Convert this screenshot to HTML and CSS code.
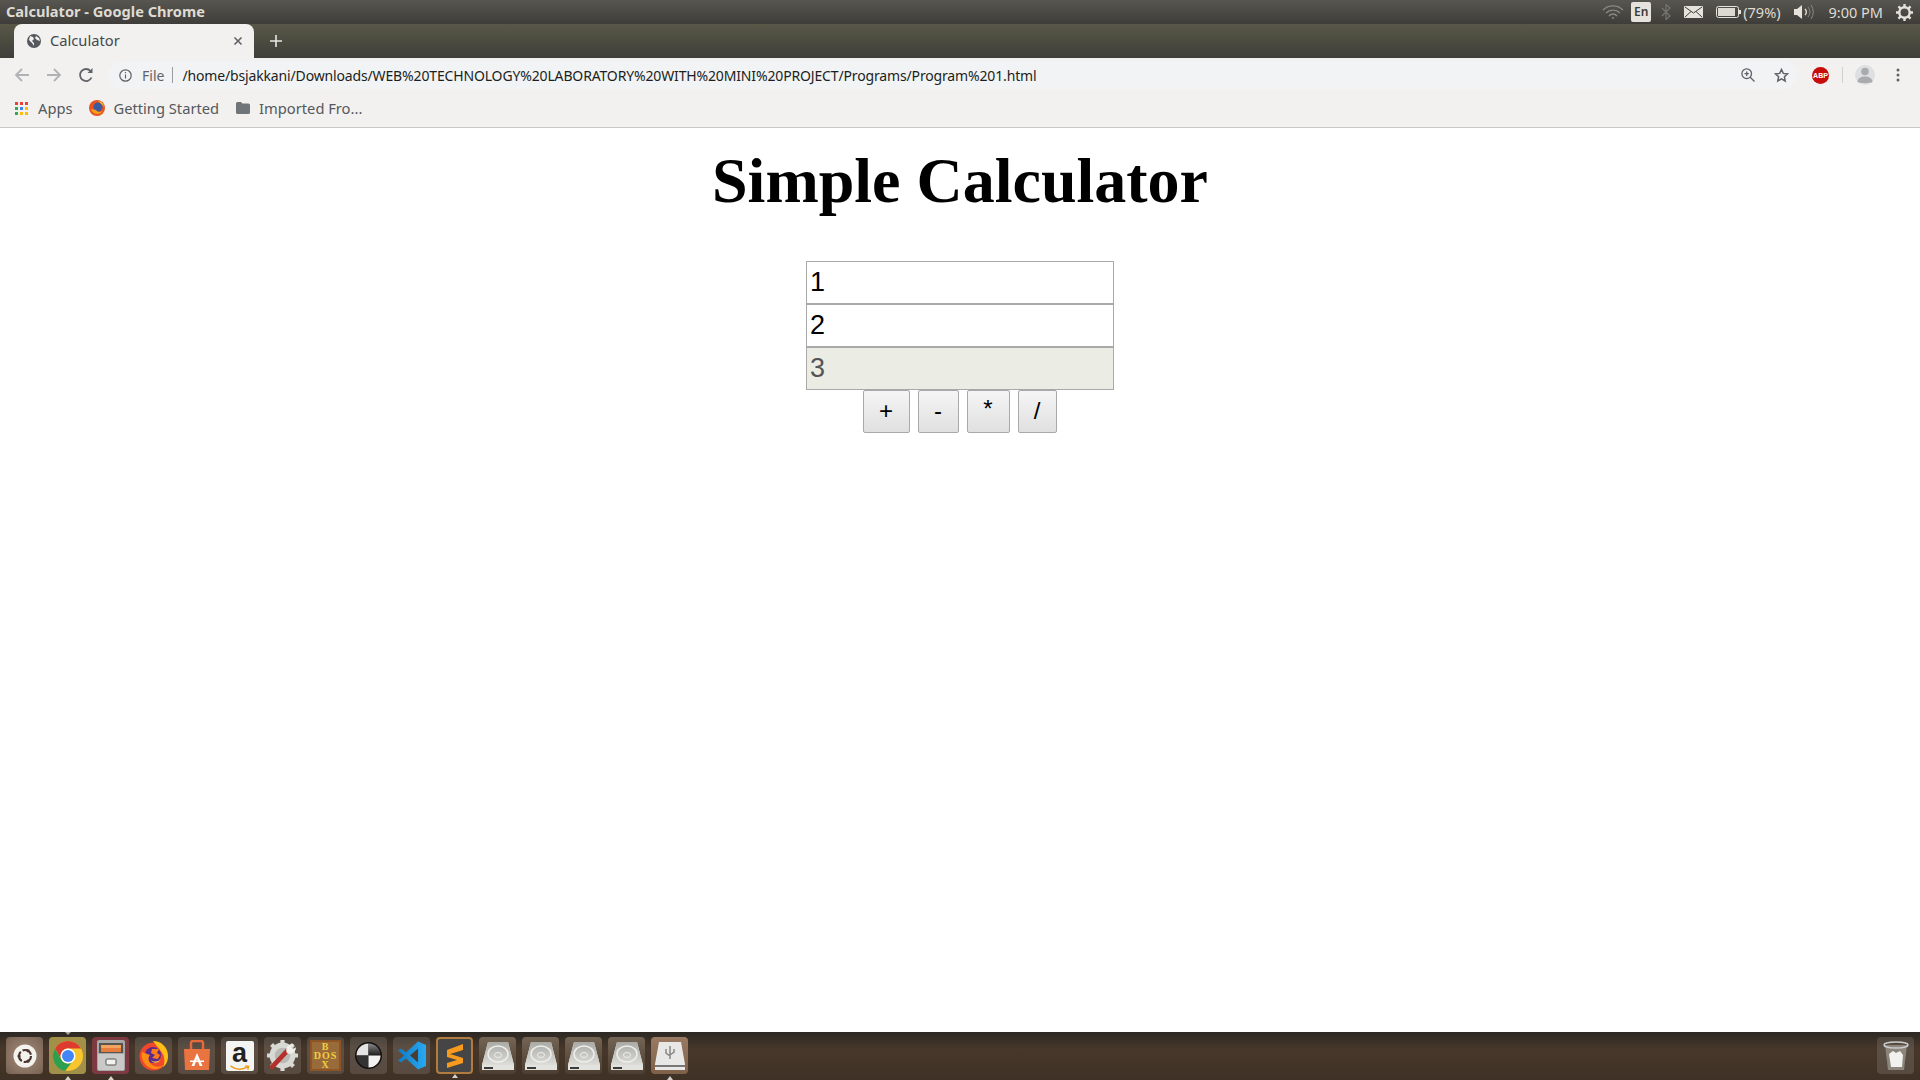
FILE: index.html
```html
<!DOCTYPE html>
<html lang="en">
  <head>
    <meta charset="UTF-8" />
    <title>Calculator - Google Chrome</title>
    <link rel="stylesheet" href="styles.css">
  </head>

  <body>
    <svg class="defs" width="0" height="0">
      <defs>
        <linearGradient id="diskTop" x1="0" y1="0" x2="0" y2="1">
          <stop offset="0" stop-color="#a9a9a6"/>
          <stop offset="1" stop-color="#dcdcd8"/>
        </linearGradient>
        <linearGradient id="ball" x1="0" y1="0" x2="0" y2="1">
          <stop offset="0" stop-color="#8a8a8a"/>
          <stop offset="1" stop-color="#1c1c1c"/>
        </linearGradient>
        <linearGradient id="code" x1="0" y1="0" x2="1" y2="0">
          <stop offset="0" stop-color="#0f7cc4"/>
          <stop offset="1" stop-color="#29a8f2"/>
        </linearGradient>
      </defs>
      <symbol id="disk" viewBox="0 0 32 32">
        <path d="M6 2h20l6 23v5H0v-5z" fill="#e2e2de"/>
        <path d="M6 2h20l6 23H0z" fill="url(#diskTop)"/>
        <ellipse cx="16" cy="14" rx="10" ry="8" fill="none" stroke="#eeeeea" stroke-width="1.500"/>
        <ellipse cx="16" cy="15" rx="3.500" ry="2.500" fill="none" stroke="#eeeeea"/>
        <path d="M2 27h9v2H2z" fill="#3a3a3a"/>
      </symbol>
    </svg>

    <!-- ubuntu top panel -->
    <div class="panel">
      <span class="win-title">Calculator - Google Chrome</span>
      <div class="indicators">
        <svg class="ind-wifi" width="22" height="14" viewBox="0 0 22 14" fill="none" stroke="#8a8983" stroke-width="1.300"><path d="M1 5a14 14 0 0 1 20 0M4 8a10 10 0 0 1 14 0M7 11a5 5 0 0 1 8 0"/><circle cx="11" cy="13" r="1" fill="#8a8983" stroke="none"/></svg>
        <span class="ind-lang">En</span>
        <svg class="ind-bt" width="10" height="16" viewBox="0 0 10 16" fill="none" stroke="#77766f" stroke-width="1.200"><path d="M1 4l8 8-4 3.500V.5l4 3.500-8 8"/></svg>
        <svg class="ind-mail" width="19" height="12" viewBox="0 0 19 12"><rect width="19" height="12" rx="1" fill="#e6e3dc"/><path d="M1 1l8.500 6L18 1M1 11l6-5.500M18 11l-6-5.500" fill="none" stroke="#3f3e39"/></svg>
        <svg class="ind-batt" width="25" height="12" viewBox="0 0 25 12"><rect x=".5" y=".5" width="22" height="11" rx="2" fill="none" stroke="#e6e3dc"/><rect x="2" y="2" width="17" height="8" fill="#dcd9d2"/><rect x="23" y="4" width="2" height="4" fill="#e6e3dc"/></svg>
        <span class="ind-text ind-pct">(79%)</span>
        <svg class="ind-vol" width="21" height="16" viewBox="0 0 21 16" fill="none" stroke="#8a8983"><path d="M0 5h3l5-4v14l-5-4H0z" fill="#e6e3dc" stroke="none"/><path d="M11 5a4 4 0 0 1 0 6" stroke="#e6e3dc" stroke-width="1.300"/><path d="M14 3a8 8 0 0 1 0 10M17 1a12 12 0 0 1 0 14"/></svg>
        <span class="ind-text ind-time">9:00 PM</span>
        <svg class="ind-gear" width="17" height="17" viewBox="0 0 18 18"><circle cx="9" cy="9" r="5.500" fill="none" stroke="#e6e3dc" stroke-width="2.500"/><path d="M9 0v4M9 14v4M0 9h4M14 9h4M2.600 2.600l2.800 2.800M12.600 12.600l2.800 2.800M2.600 15.400l2.800-2.800M12.600 5.400l2.800-2.800" stroke="#e6e3dc" stroke-width="2.500"/></svg>
      </div>
    </div>

    <div class="tabstrip">
      <div class="tab">
        <svg width="14" height="14" viewBox="0 0 14 14"><circle cx="7" cy="7" r="7" fill="#55595e"/><path d="M3 2l3 1 1 2-2 2 2 2v3L5 9 2 6zM9 2l3 2 1 3-3-1-2-2z" fill="#f2f1ef"/></svg>
        <span class="tab-name">Calculator</span>
        <svg class="tab-close" width="10" height="10" viewBox="0 0 10 10"><path d="M1.500 1.500l7 7M8.500 1.500l-7 7" stroke="#5f6368" stroke-width="1.600"/></svg>
      </div>
      <svg class="tab-new" width="12" height="12" viewBox="0 0 12 12"><path d="M6 0v12M0 6h12" stroke="#e8e8e4" stroke-width="1.600"/></svg>
    </div>

    <div class="toolbar">
      <button class="nav-btn">
        <svg width="16" height="16" viewBox="0 0 16 16" fill="none" stroke="#b0b2b5" stroke-width="1.800"><path d="M15 8H2M8 2L2 8l6 6"/></svg>
      </button>
      <button class="nav-btn">
        <svg width="16" height="16" viewBox="0 0 16 16" fill="none" stroke="#b0b2b5" stroke-width="1.800"><path d="M1 8h13M8 2l6 6-6 6"/></svg>
      </button>
      <button class="nav-btn">
        <svg width="16" height="16" viewBox="0 0 16 16" fill="none" stroke="#5f6368" stroke-width="1.800"><path d="M13.500 10.500A6 6 0 1 1 12.500 4"/><path d="M14.500 1v5h-5z" fill="#5f6368" stroke="none"/></svg>
      </button>
      <div class="omnibox">
        <svg width="13" height="13" viewBox="0 0 13 13" fill="none" stroke="#5f6368" stroke-width="1.200"><circle cx="6.500" cy="6.500" r="5.700"/><path d="M6.500 5.500v4M6.500 3v1.300"/></svg>
        <span class="chip">File</span>
        <span class="chip-sep"></span>
        <span class="url">/home/bsjakkani/Downloads/WEB%20TECHNOLOGY%20LABORATORY%20WITH%20MINI%20PROJECT/Programs/Program%201.html</span>
        <div class="omni-actions">
          <svg width="14" height="14" viewBox="0 0 14 14" fill="none" stroke="#5f6368" stroke-width="1.300"><circle cx="5.700" cy="5.700" r="4.800"/><path d="M9.200 9.200L13.500 13.500M3.500 5.700h4.400M5.700 3.500v4.400"/></svg>
          <svg width="15" height="15" viewBox="0 0 15 15" fill="none" stroke="#5f6368" stroke-width="1.500"><path d="M7.500 1.500l1.800 3.900 4.200.5-3.100 2.900.8 4.200-3.700-2.100-3.700 2.100.8-4.200L1.500 5.900l4.200-.5z"/></svg>
        </div>
      </div>
      <div class="abp">ABP</div>
      <span class="tool-sep"></span>
      <div class="avatar">
        <svg width="20" height="20" viewBox="0 0 20 20" fill="#a9abae"><circle cx="10" cy="6.500" r="3.800"/><path d="M2.500 17c0-3.500 3.500-5.500 7.500-5.500s7.500 2 7.500 5.500c-2 1.500-13 1.500-15 0z"/></svg>
      </div>
      <svg class="menu" width="4" height="14" viewBox="0 0 4 14" fill="#5f6368"><circle cx="2" cy="2" r="1.500"/><circle cx="2" cy="7" r="1.500"/><circle cx="2" cy="12" r="1.500"/></svg>
    </div>

    <div class="bookmarks">
      <div class="mark mark-apps">
        <svg width="13" height="13" viewBox="0 0 13 13">
          <path d="M0 0h3v3H0z" fill="#ea4335"/><path d="M5 0h3v3H5z" fill="#ea4335"/><path d="M10 0h3v3h-3z" fill="#ea4335"/>
          <path d="M0 5h3v3H0z" fill="#34a853"/><path d="M5 5h3v3H5z" fill="#4285f4"/><path d="M10 5h3v3h-3z" fill="#fbbc05"/>
          <path d="M0 10h3v3H0z" fill="#34a853"/><path d="M5 10h3v3H5z" fill="#fbbc05"/><path d="M10 10h3v3h-3z" fill="#fbbc05"/>
        </svg>
        <span>Apps</span>
      </div>
      <div class="mark">
        <svg width="16" height="16" viewBox="0 0 16 16"><circle cx="8" cy="8" r="8" fill="#e8541f"/><circle cx="9" cy="7" r="4.500" fill="#3d5a9e"/><path d="M2 9c1 5 8 7 12 2-3 2-6 1-7-1z" fill="#f7a11a"/><path d="M9 1c3 0 6 3 6 6-2-3-4-4-6-6z" fill="#fbc02d"/></svg>
        <span>Getting Started</span>
      </div>
      <div class="mark">
        <svg width="14" height="12" viewBox="0 0 14 12" fill="#70757a"><path d="M0 1.500A1.500 1.500 0 0 1 1.500 0H5l1.500 1.500h6A1.500 1.500 0 0 1 14 3v7.500a1.500 1.500 0 0 1-1.500 1.500h-11A1.500 1.500 0 0 1 0 10.500z"/></svg>
        <span>Imported Fro...</span>
      </div>
    </div>

    <main class="page">
      <h1>Simple Calculator</h1>
      <form class="calc">
        <input type="text" value="1" />
        <input type="text" value="2" />
        <input type="text" class="result" value="3" readonly />
        <div class="ops">
          <button type="button" class="op op-add">+</button>
          <button type="button" class="op op-sub">-</button>
          <button type="button" class="op op-mul">*</button>
          <button type="button" class="op op-div">/</button>
        </div>
      </form>
    </main>

    <!-- launcher -->
    <div class="dock">
      <div class="tile tile-dash">
        <svg width="26" height="26" viewBox="0 0 26 26"><circle cx="13" cy="13" r="11.500" fill="#f4f2ef"/><circle cx="13" cy="13" r="6" fill="none" stroke="#4a362e" stroke-width="2.200" stroke-dasharray="10.500 2"/><circle cx="7" cy="13" r="1.600" fill="#4a362e"/><circle cx="16" cy="7.800" r="1.600" fill="#4a362e"/><circle cx="16" cy="18.200" r="1.600" fill="#4a362e"/></svg>
      </div>
      <div class="tile tile-chrome running-top running">
        <svg width="32" height="32" viewBox="0 0 32 32"><circle cx="16" cy="16" r="15" fill="#f8c52c"/><path d="M3 8.500A15 15 0 0 1 29 8.500H16a7.500 7.500 0 0 0-6.500 11.200z" fill="#dd3b2f"/><path d="M3 8.500l6.500 11.200A7.500 7.500 0 0 0 19.700 22.500L13 31A15 15 0 0 1 3 8.500z" fill="#2e9e4f"/><circle cx="16" cy="16" r="7.500" fill="#fff"/><circle cx="16" cy="16" r="6" fill="#4285f4"/></svg>
      </div>
      <div class="tile tile-files running">
        <svg width="28" height="31" viewBox="0 0 28 31"><rect width="28" height="31" rx="2" fill="#a8a8a6"/><rect x="2" y="3" width="24" height="10" fill="#57534e"/><rect x="4" y="5" width="20" height="3" fill="#f2a35e"/><rect x="4" y="8" width="20" height="4" fill="#e57d3e"/><rect x="1" y="14" width="26" height="16" fill="#c9c9c7"/><rect x="9" y="19" width="10" height="6" rx="1" fill="#f2f2f0" stroke="#555"/></svg>
      </div>
      <div class="tile tile-fox">
        <svg width="30" height="31" viewBox="0 0 30 31"><circle cx="14.500" cy="16.500" r="14" fill="#f0482b"/><path d="M14 1c8 0 15 6 15 15 0 5-2 9-5 11 3-6 1-13-3-17-2-3-5-6-7-9z" fill="#ffbe17"/><circle cx="14" cy="15" r="8" fill="#5a2b8f"/><path d="M3 12c-2 8 5 17 13 17 4 0 7-2 9-4-5 3-11 2-14-2-2-3-2-6 0-8z" fill="#ff8a14"/><path d="M13 9h7l-2 4 3 2-2 4-6-1 3-3-4-2z" fill="#ff7a1c"/><path d="M12 20c2 2 6 2 9 0-1 3-7 4-9 0z" fill="#ffd23a"/></svg>
      </div>
      <div class="tile">
        <svg width="28" height="31" viewBox="0 0 28 31"><path d="M1 9h26l-1 21H2z" fill="#ea7440"/><path d="M8 9V3c0-1 1-2 2-2h8c1 0 2 1 2 2v6" fill="none" stroke="#e8683a" stroke-width="2.500"/><path d="M14 13l5.500 13h-2.800L14 19l-2.700 7H8.500z" fill="#fff"/><path d="M7 20.500h14v1.500H7z" fill="#fff"/></svg>
      </div>
      <div class="tile">
        <div class="amazon">
          <span>a</span>
          <svg width="22" height="7" viewBox="0 0 22 7" fill="none" stroke="#f19c1f" stroke-width="1.700"><path d="M0 1c6 5 14 5 20 1M17 1l4 .5-1 4"/></svg>
        </div>
      </div>
      <div class="tile">
        <svg width="31" height="31" viewBox="0 0 30 30"><circle cx="15" cy="15" r="10" fill="#b9b9b5" stroke="#d8d8d4" stroke-width="5"/><path d="M15 0v30M0 15h30M4.400 4.400l21.200 21.200M25.600 4.400L4.400 25.600" stroke="#d8d8d4" stroke-width="4" stroke-dasharray="5 20 5"/><path d="M5 26L20 10" stroke="#b3312a" stroke-width="4.500" stroke-linecap="round"/><path d="M19 12a6 6 0 0 1 7-8l-3 3 2 2 3-2a6 6 0 0 1-8 6z" fill="#efefec"/></svg>
      </div>
      <div class="tile">
        <div class="dosbox">
          <span>B</span>
          <span>DOS</span>
          <span>X</span>
        </div>
      </div>
      <div class="tile">
        <svg width="27" height="27" viewBox="0 0 27 27"><circle cx="13.500" cy="13.500" r="13.500" fill="#111"/><path d="M13.500 1.500a12 12 0 0 0-12 12h12z" fill="#e4e4e4"/><path d="M13.500 1.500a12 12 0 0 1 12 12h-12z" fill="url(#ball)"/><path d="M1.500 13.500a12 12 0 0 0 12 12v-12z" fill="#333"/><path d="M25.500 13.500a12 12 0 0 1-12 12v-12z" fill="#f2f2f2"/></svg>
      </div>
      <div class="tile">
        <svg width="30" height="31" viewBox="0 0 30 30"><path d="M21 1l8 3.500v21L21 29 9 18l-5 4-3-2 6-5-6-5 3-2 5 4z" fill="url(#code)"/><path d="M21 8v14l-8-7z" fill="#4a3e32"/></svg>
      </div>
      <div class="tile tile-sublime running">
        <svg width="18" height="24" viewBox="0 0 18 24"><path d="M17 0v6L1 11V6zM1 9l16 5v5L1 24v-5l10-3-10-3z" fill="#f79a1e"/></svg>
      </div>
      <div class="tile tile-disk"><svg width="32" height="32"><use href="#disk"/></svg></div>
      <div class="tile tile-disk"><svg width="32" height="32"><use href="#disk"/></svg></div>
      <div class="tile tile-disk"><svg width="32" height="32"><use href="#disk"/></svg></div>
      <div class="tile tile-disk"><svg width="32" height="32"><use href="#disk"/></svg></div>
      <div class="tile tile-usb running">
        <svg width="32" height="30" viewBox="0 0 32 30"><path d="M5 1h22l4 22v6H1v-6z" fill="#e8e8e6"/><path d="M1 24h30v2H1z" fill="#777"/><path d="M16 5v13M12 8v4l4 3M20 8v3l-4 3" fill="none" stroke="#888" stroke-width="1.500"/></svg>
      </div>
      <div class="tile tile-trash">
        <svg width="26" height="30" viewBox="0 0 26 30"><path d="M2 4h22l-3 25H5z" fill="#8b857c"/><ellipse cx="13" cy="4" rx="12" ry="3" fill="none" stroke="#ccc" stroke-width="1.500"/><path d="M6 13l4-3 3 2 4-2 3 4-1 12H8z" fill="#f1f1f0"/></svg>
      </div>
    </div>
  </body>
</html>
```

FILE: styles.css
```css
* {
  margin: 0;
  padding: 0;
  box-sizing: border-box;
}

html,
body {
  height: 100%;
  overflow: hidden;
}

body {
  display: flex;
  flex-direction: column;
  background-color: #fff;
  font-family: "Noto Sans", "Open Sans", sans-serif;
}

.defs {
  position: absolute;
}

/* top panel */
.panel {
  height: 24px;
  display: flex;
  justify-content: space-between;
  align-items: center;
  padding: 0 7px 0 6px;
  background: linear-gradient(#575650, #3e3d39);
}

.win-title {
  margin-top: -2px;
  color: #dfdbd2;
  font-size: 14.600px;
  font-weight: 700;
}

.indicators {
  display: flex;
  align-items: center;
}

.ind-lang {
  width: 20px;
  height: 20px;
  margin-left: 7px;
  border-radius: 2px;
  background-color: #e6e3dc;
  color: #3c3b37;
  font-size: 12px;
  font-weight: 600;
  line-height: 20px;
  text-align: center;
}

.ind-bt {
  margin-left: 10px;
}

.ind-mail {
  margin-left: 13px;
}

.ind-batt {
  margin-left: 13px;
}

.ind-text {
  color: #dfdbd2;
  font-size: 14.500px;
}

.ind-pct {
  margin-left: 2px;
}

.ind-vol {
  margin-left: 13px;
}

.ind-time {
  margin-left: 14px;
}

.ind-gear {
  margin-left: 13px;
}

/* tabs */
.tabstrip {
  height: 34px;
  display: flex;
  align-items: center;
  padding-left: 14px;
  background: linear-gradient(#585848, #3f3e39);
}

.tab {
  width: 240px;
  height: 34px;
  display: flex;
  align-items: center;
  padding: 0 11px 0 13px;
  border-radius: 8px 8px 0 0;
  background-color: #f2f1ef;
}

.tab-name {
  flex: 1;
  margin-left: 9px;
  margin-top: -2px;
  color: #45494e;
  font-size: 14.700px;
}

.tab-new {
  margin-left: 16px;
}

/* toolbar */
.toolbar {
  height: 34px;
  display: flex;
  align-items: center;
  padding: 0 20px 0 14px;
  background-color: #f2f1ef;
}

.nav-btn {
  width: 16px;
  height: 16px;
  margin-right: 16px;
  border: none;
  background: none;
  display: flex;
}

.omnibox {
  width: 1690px;
  height: 28px;
  margin-left: -2px;
  display: flex;
  align-items: center;
  padding: 0 8px 0 11px;
  border-radius: 14px;
  background-color: #f1f3f4;
}

.chip {
  margin-left: 10px;
  color: #5f6368;
  font-size: 14px;
}

.chip-sep {
  width: 1px;
  height: 16px;
  margin: 0 9px 0 8px;
  background-color: #9a9da0;
}

.url {
  flex: 1;
  color: #1c1e21;
  font-size: 14px;
  letter-spacing: -0.150px;
  white-space: nowrap;
}

.omni-actions {
  display: flex;
  align-items: center;
  gap: 19px;
}

.abp {
  width: 17px;
  height: 17px;
  margin-left: 15px;
  border-radius: 50%;
  background-color: #c70d0c;
  color: #fff;
  font-family: "Liberation Sans", sans-serif;
  font-size: 7px;
  font-weight: 700;
  line-height: 17px;
  text-align: center;
}

.tool-sep {
  width: 1px;
  height: 16px;
  margin-left: 13px;
  background-color: #cfd0d1;
}

.avatar {
  width: 20px;
  height: 20px;
  margin-left: 12px;
  border-radius: 50%;
  background-color: #dedfe0;
}

.menu {
  margin-left: 21px;
}

/* bookmarks bar */
.bookmarks {
  height: 36px;
  display: flex;
  align-items: center;
  gap: 17px;
  padding: 0 0 3px 15px;
  border-bottom: 1px solid #c8c8c6;
  background-color: #f2f1ef;
}

.mark {
  display: flex;
  align-items: center;
  gap: 9px;
  color: #55585c;
  font-size: 14.700px;
}

.mark-apps {
  gap: 10px;
  margin-right: -1px;
}

/* the calculator page */
.page {
  flex: 1;
  display: flex;
  flex-direction: column;
  align-items: center;
}

h1 {
  margin-top: 16px;
  color: #000;
  font-family: "Liberation Serif", serif;
  font-size: 64px;
  font-weight: 700;
  line-height: 74px;
}

.calc {
  width: 308px;
  margin-top: 43px;
  display: flex;
  flex-direction: column;
}

.calc input {
  width: 308px;
  height: 43px;
  padding: 0 3px;
  border: 1px solid #a9a9a9;
  color: #000;
  font-family: "Liberation Sans", Arial, sans-serif;
  font-size: 27px;
  outline: none;
}

.calc .result {
  background-color: #ebede5;
  color: #545454;
}

.ops {
  display: flex;
  justify-content: center;
  gap: 8px;
  padding-right: 1px;
}

.op {
  height: 43px;
  padding: 0 0 2px;
  border: 1px solid #a9a9a9;
  border-radius: 2px;
  background: linear-gradient(#f5f5f5, #e0e0e0);
  color: #000;
  font-family: "Liberation Sans", Arial, sans-serif;
  font-size: 24px;
}

.op-add {
  width: 47px;
}

.op-sub {
  width: 41px;
}

.op-mul {
  width: 43px;
  padding-bottom: 5px;
}

.op-div {
  width: 39px;
}

/* launcher */
.dock {
  height: 48px;
  display: flex;
  align-items: center;
  gap: 6px;
  padding: 0 6px 1px;
  background: linear-gradient(#2c2823, #47372a 35%, #3f3125);
}

.tile {
  position: relative;
  width: 37px;
  height: 37px;
  flex-shrink: 0;
  display: flex;
  align-items: center;
  justify-content: center;
  border-radius: 4px;
  background-color: rgba(255, 255, 255, 0.12);
}

/* little arrows for running apps */
.running::after,
.running-top::before {
  content: "";
  position: absolute;
  left: 50%;
  margin-left: -3px;
  border-left: 3px solid transparent;
  border-right: 3px solid transparent;
}

.running::after {
  bottom: -6px;
  border-bottom: 4px solid #d6d3cd;
}

.running-top::before {
  top: -5px;
  border-top: 3px solid #a9a6a0;
}

.tile-dash {
  background: radial-gradient(circle, #a88f80, #75604f);
}

.tile-chrome {
  background-color: #a39048;
}

.tile-files {
  background-color: #7d3a42;
}

.tile-sublime {
  border: 2px solid #b07c3f;
  background-color: #454545;
}

.tile-disk {
  background: linear-gradient(#736454, #4c3e30);
}

.tile-usb {
  background: linear-gradient(#9a7a62, #7f6049);
}

.tile-trash {
  margin-left: auto;
}

.amazon {
  width: 28px;
  height: 30px;
  display: flex;
  flex-direction: column;
  align-items: center;
  border-radius: 2px;
  background-color: #f4f4f2;
  color: #222;
  font-family: "Liberation Sans", sans-serif;
  font-size: 27px;
  font-weight: 700;
  line-height: 24px;
}

.dosbox {
  width: 31px;
  height: 31px;
  display: flex;
  flex-direction: column;
  align-items: center;
  border: 2px solid #8d5526;
  background-color: #9a6b3a;
  color: #f0cf3f;
  font-family: "Liberation Serif", serif;
  font-size: 10px;
  font-weight: 700;
  line-height: 9px;
  letter-spacing: 1px;
}
```
